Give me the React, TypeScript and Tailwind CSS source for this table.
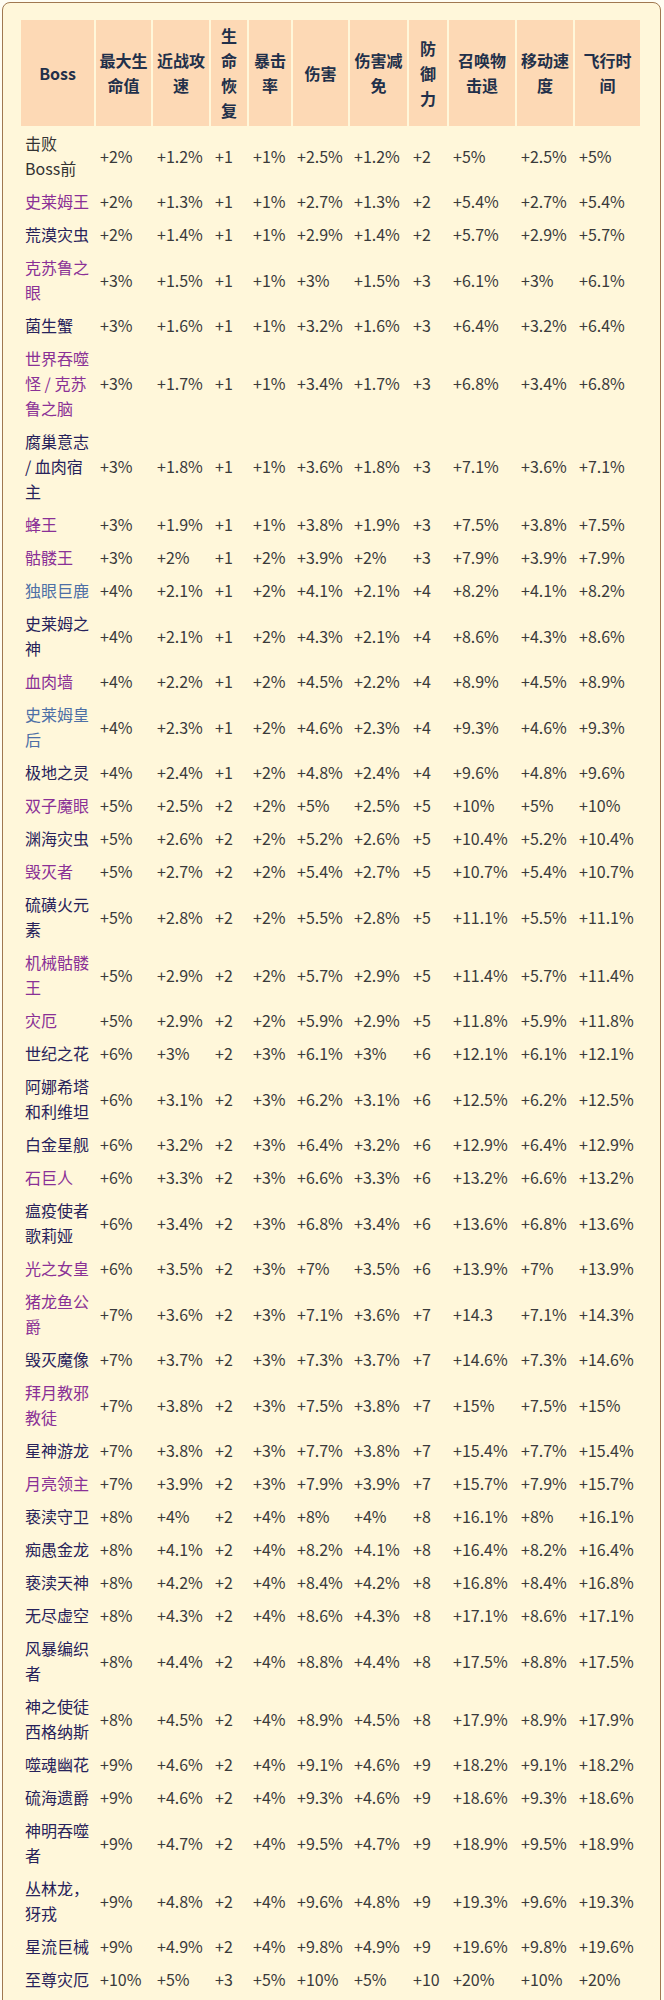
import React from "react";

type Row = { name: string[]; color: "p" | "d" | "b" | "g"; v: string[] };

const P = "p", D = "d", B = "b";

const rows: Row[] = [
  { name: ["击败", "Boss前"], color: "g", v: ["+2%", "+1.2%", "+1", "+1%", "+2.5%", "+1.2%", "+2", "+5%", "+2.5%", "+5%"] },
  { name: ["史莱姆王"], color: P, v: ["+2%", "+1.3%", "+1", "+1%", "+2.7%", "+1.3%", "+2", "+5.4%", "+2.7%", "+5.4%"] },
  { name: ["荒漠灾虫"], color: D, v: ["+2%", "+1.4%", "+1", "+1%", "+2.9%", "+1.4%", "+2", "+5.7%", "+2.9%", "+5.7%"] },
  { name: ["克苏鲁之", "眼"], color: P, v: ["+3%", "+1.5%", "+1", "+1%", "+3%", "+1.5%", "+3", "+6.1%", "+3%", "+6.1%"] },
  { name: ["菌生蟹"], color: D, v: ["+3%", "+1.6%", "+1", "+1%", "+3.2%", "+1.6%", "+3", "+6.4%", "+3.2%", "+6.4%"] },
  { name: ["世界吞噬", "怪 / 克苏", "鲁之脑"], color: P, v: ["+3%", "+1.7%", "+1", "+1%", "+3.4%", "+1.7%", "+3", "+6.8%", "+3.4%", "+6.8%"] },
  { name: ["腐巢意志", "/ 血肉宿", "主"], color: D, v: ["+3%", "+1.8%", "+1", "+1%", "+3.6%", "+1.8%", "+3", "+7.1%", "+3.6%", "+7.1%"] },
  { name: ["蜂王"], color: P, v: ["+3%", "+1.9%", "+1", "+1%", "+3.8%", "+1.9%", "+3", "+7.5%", "+3.8%", "+7.5%"] },
  { name: ["骷髅王"], color: P, v: ["+3%", "+2%", "+1", "+2%", "+3.9%", "+2%", "+3", "+7.9%", "+3.9%", "+7.9%"] },
  { name: ["独眼巨鹿"], color: B, v: ["+4%", "+2.1%", "+1", "+2%", "+4.1%", "+2.1%", "+4", "+8.2%", "+4.1%", "+8.2%"] },
  { name: ["史莱姆之", "神"], color: D, v: ["+4%", "+2.1%", "+1", "+2%", "+4.3%", "+2.1%", "+4", "+8.6%", "+4.3%", "+8.6%"] },
  { name: ["血肉墙"], color: P, v: ["+4%", "+2.2%", "+1", "+2%", "+4.5%", "+2.2%", "+4", "+8.9%", "+4.5%", "+8.9%"] },
  { name: ["史莱姆皇", "后"], color: B, v: ["+4%", "+2.3%", "+1", "+2%", "+4.6%", "+2.3%", "+4", "+9.3%", "+4.6%", "+9.3%"] },
  { name: ["极地之灵"], color: D, v: ["+4%", "+2.4%", "+1", "+2%", "+4.8%", "+2.4%", "+4", "+9.6%", "+4.8%", "+9.6%"] },
  { name: ["双子魔眼"], color: P, v: ["+5%", "+2.5%", "+2", "+2%", "+5%", "+2.5%", "+5", "+10%", "+5%", "+10%"] },
  { name: ["渊海灾虫"], color: D, v: ["+5%", "+2.6%", "+2", "+2%", "+5.2%", "+2.6%", "+5", "+10.4%", "+5.2%", "+10.4%"] },
  { name: ["毁灭者"], color: P, v: ["+5%", "+2.7%", "+2", "+2%", "+5.4%", "+2.7%", "+5", "+10.7%", "+5.4%", "+10.7%"] },
  { name: ["硫磺火元", "素"], color: D, v: ["+5%", "+2.8%", "+2", "+2%", "+5.5%", "+2.8%", "+5", "+11.1%", "+5.5%", "+11.1%"] },
  { name: ["机械骷髅", "王"], color: P, v: ["+5%", "+2.9%", "+2", "+2%", "+5.7%", "+2.9%", "+5", "+11.4%", "+5.7%", "+11.4%"] },
  { name: ["灾厄"], color: P, v: ["+5%", "+2.9%", "+2", "+2%", "+5.9%", "+2.9%", "+5", "+11.8%", "+5.9%", "+11.8%"] },
  { name: ["世纪之花"], color: D, v: ["+6%", "+3%", "+2", "+3%", "+6.1%", "+3%", "+6", "+12.1%", "+6.1%", "+12.1%"] },
  { name: ["阿娜希塔", "和利维坦"], color: D, v: ["+6%", "+3.1%", "+2", "+3%", "+6.2%", "+3.1%", "+6", "+12.5%", "+6.2%", "+12.5%"] },
  { name: ["白金星舰"], color: D, v: ["+6%", "+3.2%", "+2", "+3%", "+6.4%", "+3.2%", "+6", "+12.9%", "+6.4%", "+12.9%"] },
  { name: ["石巨人"], color: P, v: ["+6%", "+3.3%", "+2", "+3%", "+6.6%", "+3.3%", "+6", "+13.2%", "+6.6%", "+13.2%"] },
  { name: ["瘟疫使者", "歌莉娅"], color: D, v: ["+6%", "+3.4%", "+2", "+3%", "+6.8%", "+3.4%", "+6", "+13.6%", "+6.8%", "+13.6%"] },
  { name: ["光之女皇"], color: P, v: ["+6%", "+3.5%", "+2", "+3%", "+7%", "+3.5%", "+6", "+13.9%", "+7%", "+13.9%"] },
  { name: ["猪龙鱼公", "爵"], color: P, v: ["+7%", "+3.6%", "+2", "+3%", "+7.1%", "+3.6%", "+7", "+14.3", "+7.1%", "+14.3%"] },
  { name: ["毁灭魔像"], color: D, v: ["+7%", "+3.7%", "+2", "+3%", "+7.3%", "+3.7%", "+7", "+14.6%", "+7.3%", "+14.6%"] },
  { name: ["拜月教邪", "教徒"], color: P, v: ["+7%", "+3.8%", "+2", "+3%", "+7.5%", "+3.8%", "+7", "+15%", "+7.5%", "+15%"] },
  { name: ["星神游龙"], color: D, v: ["+7%", "+3.8%", "+2", "+3%", "+7.7%", "+3.8%", "+7", "+15.4%", "+7.7%", "+15.4%"] },
  { name: ["月亮领主"], color: P, v: ["+7%", "+3.9%", "+2", "+3%", "+7.9%", "+3.9%", "+7", "+15.7%", "+7.9%", "+15.7%"] },
  { name: ["亵渎守卫"], color: D, v: ["+8%", "+4%", "+2", "+4%", "+8%", "+4%", "+8", "+16.1%", "+8%", "+16.1%"] },
  { name: ["痴愚金龙"], color: D, v: ["+8%", "+4.1%", "+2", "+4%", "+8.2%", "+4.1%", "+8", "+16.4%", "+8.2%", "+16.4%"] },
  { name: ["亵渎天神"], color: D, v: ["+8%", "+4.2%", "+2", "+4%", "+8.4%", "+4.2%", "+8", "+16.8%", "+8.4%", "+16.8%"] },
  { name: ["无尽虚空"], color: D, v: ["+8%", "+4.3%", "+2", "+4%", "+8.6%", "+4.3%", "+8", "+17.1%", "+8.6%", "+17.1%"] },
  { name: ["风暴编织", "者"], color: D, v: ["+8%", "+4.4%", "+2", "+4%", "+8.8%", "+4.4%", "+8", "+17.5%", "+8.8%", "+17.5%"] },
  { name: ["神之使徒", "西格纳斯"], color: D, v: ["+8%", "+4.5%", "+2", "+4%", "+8.9%", "+4.5%", "+8", "+17.9%", "+8.9%", "+17.9%"] },
  { name: ["噬魂幽花"], color: D, v: ["+9%", "+4.6%", "+2", "+4%", "+9.1%", "+4.6%", "+9", "+18.2%", "+9.1%", "+18.2%"] },
  { name: ["硫海遗爵"], color: D, v: ["+9%", "+4.6%", "+2", "+4%", "+9.3%", "+4.6%", "+9", "+18.6%", "+9.3%", "+18.6%"] },
  { name: ["神明吞噬", "者"], color: D, v: ["+9%", "+4.7%", "+2", "+4%", "+9.5%", "+4.7%", "+9", "+18.9%", "+9.5%", "+18.9%"] },
  { name: ["丛林龙，", "犽戎"], color: D, v: ["+9%", "+4.8%", "+2", "+4%", "+9.6%", "+4.8%", "+9", "+19.3%", "+9.6%", "+19.3%"] },
  { name: ["星流巨械"], color: D, v: ["+9%", "+4.9%", "+2", "+4%", "+9.8%", "+4.9%", "+9", "+19.6%", "+9.8%", "+19.6%"] },
  { name: ["至尊灾厄"], color: D, v: ["+10%", "+5%", "+3", "+5%", "+10%", "+5%", "+10", "+20%", "+10%", "+20%"] },
];

const headers: { lines: string[]; w: string }[] = [
  { lines: ["Boss"], w: "w-[73px]" },
  { lines: ["最大生", "命值"], w: "w-[55px]" },
  { lines: ["近战攻", "速"], w: "w-[56px]" },
  { lines: ["生", "命", "恢", "复"], w: "w-[36px]" },
  { lines: ["暴击", "率"], w: "w-[42px]" },
  { lines: ["伤害"], w: "w-[55px]" },
  { lines: ["伤害减", "免"], w: "w-[57px]" },
  { lines: ["防", "御", "力"], w: "w-[38px]" },
  { lines: ["召唤物", "击退"], w: "w-[66px]" },
  { lines: ["移动速", "度"], w: "w-[56px]" },
  { lines: ["飞行时", "间"], w: "w-[65px]" },
];

const colorClass: Record<string, string> = {
  p: "text-[#8a3096]",
  d: "text-[#27225a]",
  b: "text-[#4d6fa6]",
  g: "text-[#333333]",
};

function Lines({ lines }: { lines: string[] }) {
  return (
    <>
      {lines.map((l, i) => (
        <React.Fragment key={i}>
          {i > 0 && <br />}
          {l}
        </React.Fragment>
      ))}
    </>
  );
}

export default function App() {
  return (
    <div
      className="min-h-[2000px] bg-[#fffdf2] pt-[2px] pl-[2px] pr-[3px]"
      style={{ fontFamily: '"Noto Sans CJK SC", "Noto Sans", sans-serif' }}
    >
      <div className="rounded-t-[8px] border border-[#a07850] bg-[#fff7da] pl-[16px] pt-[15px] pb-[20px]">
        <table className="table-fixed w-[623px] border-separate border-spacing-[2px] text-[16px] leading-[25px]">
          <thead>
            <tr>
              {headers.map((h, i) => (
                <th
                  key={i}
                  className={`${h.w} bg-[#fdd9b5] py-[3px] px-0 text-center align-middle font-bold text-[#22304a] whitespace-nowrap`}
                >
                  <Lines lines={h.lines} />
                </th>
              ))}
            </tr>
          </thead>
          <tbody>
            {rows.map((r, ri) => (
              <tr key={ri}>
                <td className={`py-[3px] px-[4px] align-middle whitespace-nowrap ${colorClass[r.color]}`}>
                  <Lines lines={r.name} />
                </td>
                {r.v.map((v, vi) => (
                  <td key={vi} className="py-[3px] px-[4px] align-middle whitespace-nowrap text-[#3a3a3a]">
                    {v}
                  </td>
                ))}
              </tr>
            ))}
          </tbody>
        </table>
      </div>
    </div>
  );
}
